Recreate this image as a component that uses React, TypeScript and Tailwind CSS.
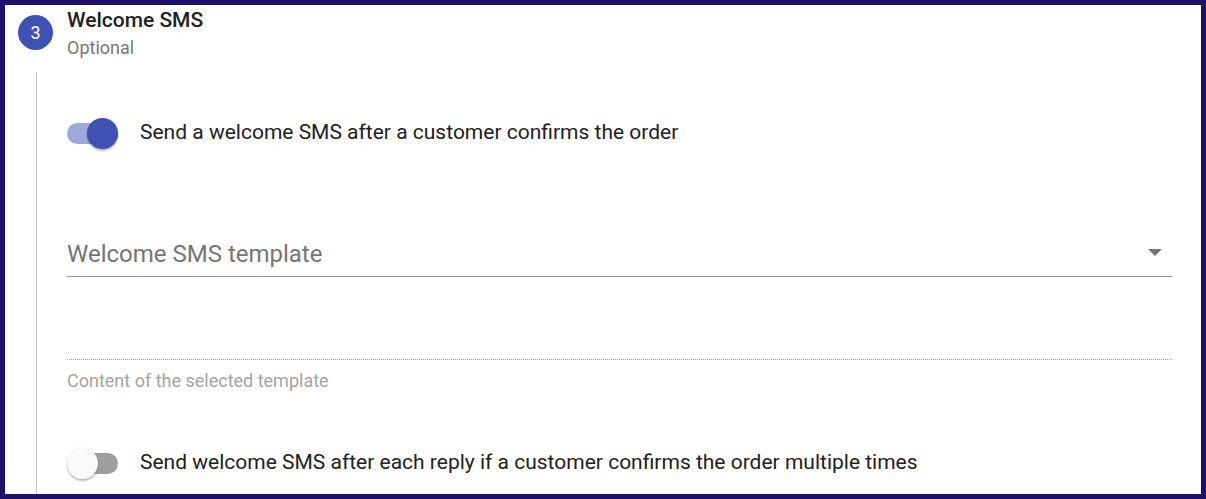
import React from 'react';

const Toggle: React.FC<{ on: boolean }> = ({ on }) => (
  <div className="relative w-[51px] h-[32px] shrink-0 flex items-center">
    <div className={`w-[51px] h-[21px] rounded-full ${on ? 'bg-[#9fa8da]' : 'bg-[#9e9e9e]'}`}></div>
    <div
      className={`absolute top-[1px] w-[31px] h-[31px] rounded-full shadow-[0_2px_2px_rgba(0,0,0,0.24),0_0_2px_rgba(0,0,0,0.12)] ${
        on ? 'left-[20px] bg-[#3f51b5]' : 'left-0 bg-[#fafafa]'
      }`}
    ></div>
  </div>
);

export default function App() {
  return (
    <div
      className="w-[1206px] h-[499px] border-[5px] border-[#1d1268] bg-white flex flex-col overflow-hidden"
      style={{ fontFamily: 'Roboto, "Liberation Sans", sans-serif' }}
    >
      {/* Step header */}
      <div className="flex items-start pt-[3px] pl-[13px]">
        <div className="mt-[7px] w-[35px] h-[35px] rounded-full bg-[#3f51b5] text-white flex items-center justify-center text-[18px]">
          3
        </div>
        <div className="ml-[14px] flex flex-col">
          <div className="leading-[24px] text-[21px] font-medium text-[#212121]">Welcome SMS</div>
          <div className="mt-[4px] leading-[24px] text-[18px] text-[#7d7670]">Optional</div>
        </div>
      </div>

      {/* Step content */}
      <div className="mt-[12px] ml-[31px] flex-1 border-l border-[#c4c4c4] pl-[30px] pr-[29px] flex flex-col">
        <div className="mt-[45px] flex items-center h-[32px]">
          <Toggle on />
          <span className="ml-[22px] text-[21px] text-[#212121]">Send a welcome SMS after a customer confirms the order</span>
        </div>

        <div className="mt-[79px] h-[49px] pt-[3px] border-b border-[#949494] flex items-center justify-between">
          <span className="text-[24px] text-[#757575]">Welcome SMS template</span>
          <span className="mr-[10px] mb-[2px] w-0 h-0 border-l-[7.5px] border-r-[7.5px] border-t-[7.5px] border-l-transparent border-r-transparent border-t-[#757575]"></span>
        </div>

        <div className="h-[83px] border-b border-dotted border-[#9e9e9e]"></div>

        <div className="mt-[11px] leading-[20px] text-[18px] text-[#a3a3a3]">Content of the selected template</div>

        <div className="mt-[56px] flex items-center h-[32px]">
          <Toggle on={false} />
          <span className="ml-[22px] text-[21px] text-[#212121]">
            Send welcome SMS after each reply if a customer confirms the order multiple times
          </span>
        </div>
      </div>
    </div>
  );
}
